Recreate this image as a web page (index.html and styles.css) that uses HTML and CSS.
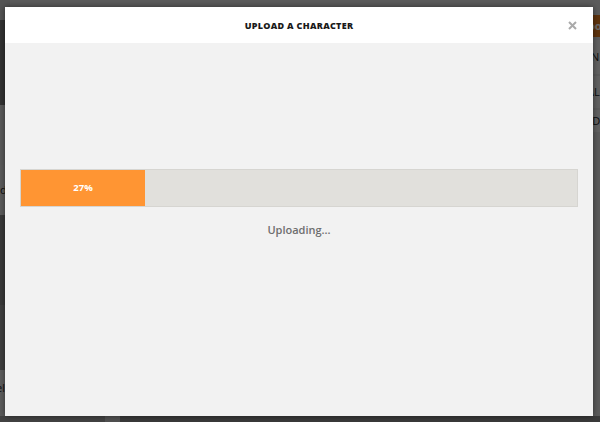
FILE: index.html
```html
<!DOCTYPE html>
<html>
<head>
<meta charset="utf-8">
<title>Upload a character</title>
<link rel="stylesheet" href="styles.css">
</head>
<body>
<div class="page">
  <div class="side left">
    <div class="blk b1"></div>
    <div class="blk b2"></div>
    <div class="blk b3">d</div>
    <div class="blk b4"></div>
    <div class="blk b5"></div>
    <div class="blk b6">el</div>
  </div>
  <div class="side right">
    <div class="blk r1">oo</div>
    <div class="blk r2">EN</div>
    <div class="blk r3">AL</div>
    <div class="blk r4">ND</div>
  </div>
  <div class="foot">
    <span class="f1"></span><span class="f2"></span><span class="f3"></span>
  </div>
</div>
<div class="overlay"></div>

<div class="modal">
  <div class="modal-head">
    <h2>Upload a character</h2>
    <svg class="close" width="9" height="9" viewBox="0 0 9 9"><path d="M1 1L8 8M8 1L1 8" stroke="#aaa" stroke-width="2"/></svg>
  </div>
  <div class="modal-body">
    <div class="progress">
      <div class="bar" style="width:22.3%">27%</div>
    </div>
    <p class="status">Uploading...</p>
  </div>
</div>
</body>
</html>
```

FILE: styles.css
```css
*{margin:0;padding:0;box-sizing:border-box;}
html,body{width:600px;height:422px;overflow:hidden;}
body{background:#f0f0f0;font-family:'Open Sans','Noto Sans',sans-serif;position:relative;}

/* page behind the dialog */
.page{position:absolute;left:0;top:0;width:600px;height:422px;background:#d8d8d8;}
.side{position:absolute;top:0;bottom:0;}
.side.left{left:0;width:10px;}
.side.right{right:0;width:12px;}
.blk{position:absolute;left:0;right:0;font-size:11px;color:#222;overflow:hidden;white-space:nowrap;}
.left .b1{top:0;height:20px;background:#c8c8c8;}
.left .b2{top:20px;height:85px;background:#7a7a7a;}
.left .b3{top:165px;height:50px;background:#dcdcdc;line-height:50px;}
.left .b4{top:215px;height:90px;background:#8a8a8a;}
.left .b5{top:305px;height:65px;background:#9a9a9a;}
.left .b6{top:370px;height:40px;background:#e0e0e0;line-height:36px;text-indent:-4px;}
.right .r1{top:15px;height:22px;background:#e07a20;color:#fff;font-weight:bold;line-height:22px;}
.right .r2{top:40px;height:34px;background:#e8e8e8;line-height:34px;text-indent:-3px;}
.right .r3{top:76px;height:32px;background:#e8e8e8;line-height:32px;text-indent:-1px;}
.right .r4{top:110px;height:22px;background:#e8e8e8;line-height:22px;text-indent:-4px;}
.foot{position:absolute;left:0;right:0;bottom:0;height:6px;display:flex;}
.foot span{display:block;height:6px;}
.f1{width:105px;background:#a0a0a0;}
.f2{width:15px;background:#c0c0c0;}
.f3{flex:1;background:#8a8a8a;}
.overlay{position:absolute;left:0;top:0;width:600px;height:422px;background:rgba(0,0,0,.58);}

/* dialog */
.modal{position:absolute;left:5px;top:7px;width:588px;height:409px;background:#f2f2f2;box-shadow:0 0 6px rgba(0,0,0,.5);}
.modal-head{height:36px;background:#fff;display:flex;align-items:center;justify-content:center;position:relative;}
.modal-head h2{font-size:9px;font-weight:800;letter-spacing:.3px;text-transform:uppercase;color:#1a1a1a;}
.close{position:absolute;right:16px;top:14px;}
.modal-body{padding:126px 15px 0;}
.progress{height:38px;background:#e1e0dc;border:1px solid #d6d5d1;}
.bar{height:36px;background:#ff9533;color:#fff;font-size:9.5px;font-weight:bold;text-align:center;line-height:36px;}
.status{text-align:center;font-size:11px;font-weight:600;color:#6e6e6e;margin-top:15px;line-height:16px;}
```
